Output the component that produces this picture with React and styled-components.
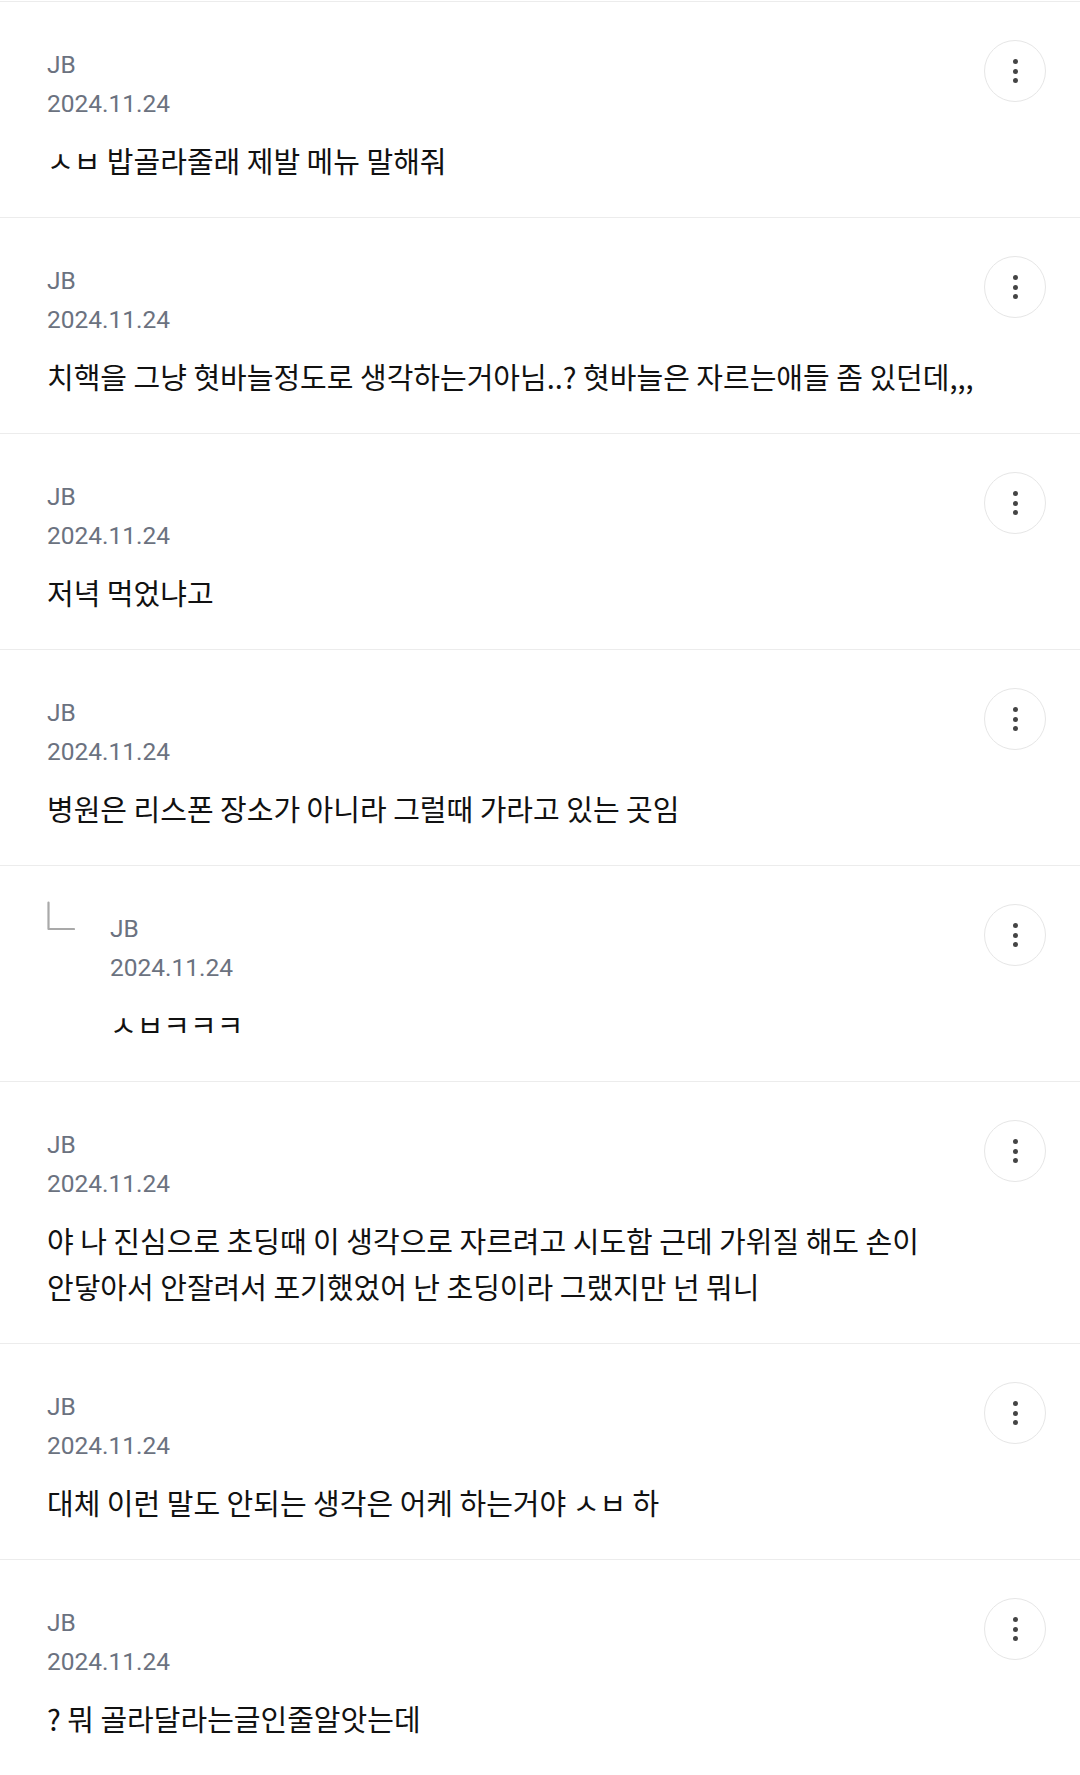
import React from "react";
import styled, { createGlobalStyle } from "styled-components";

const GlobalStyle = createGlobalStyle`
  body {
    margin: 0;
    background: #ffffff;
    font-family: "Noto Sans CJK KR", "Noto Sans", sans-serif;
  }
`;

const comments = [
  { name: "JB", date: "2024.11.24", text: "ㅅㅂ 밥골라줄래 제발 메뉴 말해줘" },
  {
    name: "JB",
    date: "2024.11.24",
    text: "치핵을 그냥 혓바늘정도로 생각하는거아님..? 혓바늘은 자르는애들 좀 있던데,,,",
  },
  { name: "JB", date: "2024.11.24", text: "저녁 먹었냐고" },
  { name: "JB", date: "2024.11.24", text: "병원은 리스폰 장소가 아니라 그럴때 가라고 있는 곳임" },
  { name: "JB", date: "2024.11.24", text: "ㅅㅂㅋㅋㅋ", reply: true },
  {
    name: "JB",
    date: "2024.11.24",
    text: "야 나 진심으로 초딩때 이 생각으로 자르려고 시도함 근데 가위질 해도 손이 안닿아서 안잘려서 포기했었어 난 초딩이라 그랬지만 넌 뭐니",
  },
  { name: "JB", date: "2024.11.24", text: "대체 이런 말도 안되는 생각은 어케 하는거야 ㅅㅂ 하" },
  { name: "JB", date: "2024.11.24", text: "? 뭐 골라달라는글인줄알앗는데" },
];

function App() {
  return (
    <>
      <GlobalStyle />
      <List>
        {comments.map((c, i) => (
          <Item key={i} $reply={c.reply}>
            {c.reply && (
              <ReplyMark>
                <svg width="28" height="30" viewBox="0 0 28 30" fill="none">
                  <path
                    d="M1.5 1.5 V28 H27"
                    stroke="#a9a9a9"
                    strokeWidth="2.2"
                    strokeLinecap="round"
                    strokeLinejoin="round"
                  />
                </svg>
              </ReplyMark>
            )}
            <Meta>
              <Name>{c.name}</Name>
              <DateText>{c.date}</DateText>
            </Meta>
            <MoreButton aria-label="more">
              <Dot />
              <Dot />
              <Dot />
            </MoreButton>
            <Content $reply={c.reply}>{c.text}</Content>
          </Item>
        ))}
      </List>
    </>
  );
}

export default App;

const List = styled.div`
  padding-top: 1px;
`;

const Item = styled.div`
  display: grid;
  grid-template-columns: ${(p) => (p.$reply ? "63px 1fr 62px" : "1fr 62px")};
  align-items: start;
  padding: 39px 34px 34px 47px;
  border-top: 1px solid #ececec;
`;

const ReplyMark = styled.div`
  grid-row: 1;
  margin-top: -4px;
  line-height: 0;
`;

const Meta = styled.div`
  grid-row: 1;
  margin-top: 5px;
  display: flex;
  flex-direction: column;
  font-family: Roboto, "Noto Sans CJK KR", sans-serif;
`;

const Name = styled.span`
  font-size: 24.5px;
  line-height: 38px;
  color: #6b7280;
`;

const DateText = styled.span`
  font-size: 24.5px;
  line-height: 39px;
  color: #6b7280;
`;

const MoreButton = styled.button`
  grid-row: 1;
  margin-top: -1px;
  width: 62px;
  height: 62px;
  border-radius: 50%;
  border: 1.5px solid #e6e6e6;
  background: #ffffff;
  padding: 0;
  display: flex;
  flex-direction: column;
  align-items: center;
  justify-content: center;
  gap: 4.5px;
`;

const Dot = styled.span`
  width: 5px;
  height: 5px;
  border-radius: 50%;
  background: #444444;
`;

const Content = styled.p`
  grid-column: ${(p) => (p.$reply ? "2 / -1" : "1 / -1")};
  margin: 14px 30px 0 0;
  font-size: 29px;
  line-height: 46px;
  color: #111111;
  word-break: keep-all;
`;
